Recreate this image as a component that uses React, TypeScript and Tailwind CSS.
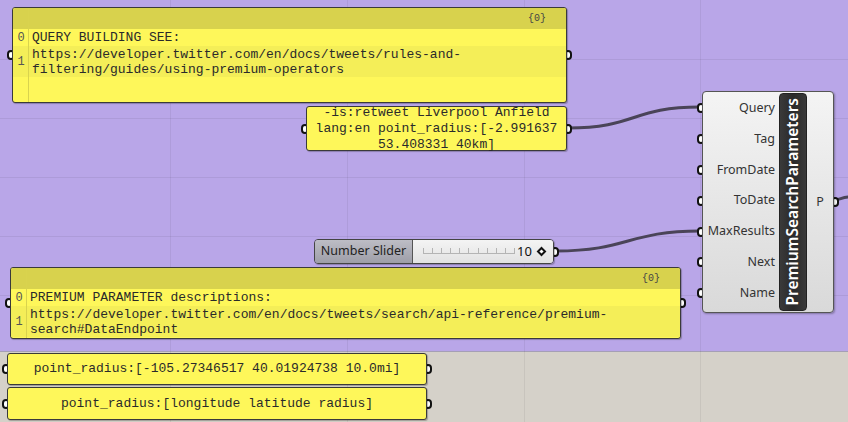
import React from 'react';

const mono = { fontFamily: '"Liberation Mono", "Courier New", monospace' };
const sans = { fontFamily: '"Noto Sans", sans-serif' };

const vLines = [170, 347, 524, 700];
const hLines = [59, 118, 177, 236, 295];

// half-hidden parameter grip on a node edge
function Port({ side }: { side: 'in' | 'out' }) {
  return (
    <div
      className={`absolute top-1/2 -translate-y-1/2 -z-10 w-[8px] h-[10px] rounded-full border-2 border-[#111] bg-white ${
        side === 'in' ? '-left-[5px]' : '-right-[5px]'
      }`}
    />
  );
}

type Row = { idx: string; lines: string[]; h: string };

function ListPanel({ className, rows }: { className: string; rows: Row[] }) {
  return (
    <div className={`absolute ${className}`}>
      <Port side="in" />
      <Port side="out" />
      <div className="relative w-full h-full flex flex-col border border-[#3a3a3a] rounded-[3px] bg-[#fef75a] overflow-hidden shadow-[1px_1px_1px_rgba(0,0,0,0.25)]">
        <div className="h-[21px] shrink-0 bg-[#d8d24d] flex justify-end items-start pr-[20px] pt-[3px] text-[10px] text-[#444]" style={mono}>
          {'{0}'}
        </div>
        {rows.map((r, i) => (
          <div key={i} className={`flex shrink-0 ${r.h} ${i % 2 === 1 ? 'bg-[#f4ee58]' : 'bg-[#fef75a]'}`}>
            <div className="w-[16px] shrink-0 flex items-center justify-center text-[12px] text-[#555]" style={mono}>
              {r.idx}
            </div>
            <div className="flex flex-col justify-center pl-[3px] text-[13px] leading-[15px] text-[#2a2a2a]" style={mono}>
              {r.lines.map((l, j) => (
                <div key={j} className="whitespace-pre">{l}</div>
              ))}
            </div>
          </div>
        ))}
        <div className="flex-1" />
        <div className="absolute left-[15px] top-0 bottom-0 w-px bg-[#d9d34e]" />
      </div>
    </div>
  );
}

function TextPanel({ className, lines }: { className: string; lines: string[] }) {
  return (
    <div className={`absolute ${className}`}>
      <Port side="in" />
      <Port side="out" />
      <div
        className="w-full h-full flex flex-col items-center justify-center border border-[#3a3a3a] rounded-[3px] bg-[#fef75a] text-[13px] leading-[16px] text-[#2a2a2a] shadow-[1px_1px_1px_rgba(0,0,0,0.25)]"
        style={mono}
      >
        {lines.map((l, i) => (
          <div key={i} className="whitespace-pre">{l}</div>
        ))}
      </div>
    </div>
  );
}

function NumberSlider() {
  return (
    <div className="absolute left-[314px] top-[239px] w-[240px] h-[25px]" style={sans}>
      <Port side="out" />
      <div className="w-full h-full flex border border-[#444] rounded-[4px] overflow-hidden shadow-[1px_1px_1px_rgba(0,0,0,0.25)]">
        <div className="w-[98px] shrink-0 bg-gradient-to-b from-[#bdbdc5] to-[#9e9ea8] border-r border-[#555] flex items-center justify-center text-[12.5px] text-[#222]">
          Number Slider
        </div>
        <div className="flex-1 bg-gradient-to-b from-[#f4f4f4] to-[#e2e2e2] flex items-center pl-[10px] pr-[8px]">
          <div className="relative w-[92px] h-[8px]">
            <div className="absolute left-0 right-0 top-[5px] h-px bg-[#b4b4b4]" />
            <div className="flex justify-between w-full h-[5px]">
              {Array.from({ length: 11 }).map((_, i) => (
                <div key={i} className="w-px h-full bg-[#b4b4b4]" />
              ))}
            </div>
          </div>
          <div className="text-[13px] text-[#111] ml-[2px]">10</div>
          <div className="ml-[6px] w-[7px] h-[7px] rotate-45 border-2 border-[#111] bg-white" />
        </div>
      </div>
    </div>
  );
}

const inputs = ['Query', 'Tag', 'FromDate', 'ToDate', 'MaxResults', 'Next', 'Name'];

function SearchComponent() {
  return (
    <div
      className="absolute left-[702px] top-[91px] w-[132px] h-[222px] flex border border-[#555] rounded-[4px] bg-gradient-to-b from-[#f4f4f4] to-[#d9d9d9] shadow-[1px_1px_2px_rgba(0,0,0,0.3)]"
      style={sans}
    >
      <div className="w-[76px] shrink-0 flex flex-col pt-[1px] pr-[4px] text-[12.5px] text-[#333]">
        {inputs.map((n) => (
          <div key={n} className="relative h-[30.8px] flex items-center justify-end">
            <div className="absolute top-1/2 -translate-y-1/2 -left-[6px] -z-10 w-[8px] h-[10px] rounded-full border-2 border-[#111] bg-white" />
            {n}
          </div>
        ))}
      </div>
      <div className="w-[28px] shrink-0 my-[1px] rounded-[4px] border border-[#222] bg-gradient-to-r from-[#3a3a3a] via-[#2a2a2a] to-[#3a3a3a] flex items-center justify-center overflow-hidden">
        <div className="[writing-mode:vertical-rl] rotate-180 text-white font-semibold text-[15.5px] whitespace-nowrap">
          PremiumSearchParameters
        </div>
      </div>
      <div className="relative flex-1 flex items-center justify-center text-[12.5px] text-[#333] pt-[1px]">
        P
        <div className="absolute top-1/2 -translate-y-1/2 -right-[6px] -z-10 w-[8px] h-[10px] rounded-full border-2 border-[#111] bg-white" />
      </div>
    </div>
  );
}

export default function App() {
  return (
    <div className="relative z-0 w-[848px] h-[422px] overflow-hidden bg-[#b9a6e8]">
      {/* canvas zones + grid */}
      <div className="absolute -z-30 left-0 right-0 top-[351px] bottom-0 bg-[#d5d1c9] border-t border-[#a59fb5]" />
      {vLines.map((x) => (
        <div key={x} className="absolute -z-30 top-0 bottom-0 w-px bg-[#0000000f]" style={{ left: x }} />
      ))}
      {hLines.map((y) => (
        <div key={y} className="absolute -z-30 left-0 right-0 h-px bg-[#00000010]" style={{ top: y }} />
      ))}

      {/* wires */}
      <svg className="absolute inset-0 -z-20" width="848" height="422">
        <path d="M568 128 C 636 128, 632 107, 700 107" fill="none" stroke="#4a4458" strokeWidth="3" />
        <path d="M556 251 C 628 251, 628 231, 700 231" fill="none" stroke="#4a4458" strokeWidth="3" />
        <path d="M834 200 C 840 200, 842 197, 850 197" fill="none" stroke="#4a4458" strokeWidth="3" />
      </svg>

      <ListPanel
        className="left-[12px] top-[7px] w-[555px] h-[96px]"
        rows={[
          { idx: '0', lines: ['QUERY BUILDING SEE:'], h: 'h-[17px]' },
          {
            idx: '1',
            lines: ['https://developer.twitter.com/en/docs/tweets/rules-and-', 'filtering/guides/using-premium-operators'],
            h: 'h-[31px]',
          },
        ]}
      />

      <TextPanel
        className="left-[306px] top-[106px] w-[261px] h-[45px]"
        lines={['-is:retweet Liverpool Anfield', 'lang:en point_radius:[-2.991637', '53.408331 40km]']}
      />

      <NumberSlider />

      <ListPanel
        className="left-[10px] top-[267px] w-[671px] h-[72px]"
        rows={[
          { idx: '0', lines: ['PREMIUM PARAMETER descriptions:'], h: 'h-[17px]' },
          {
            idx: '1',
            lines: ['https://developer.twitter.com/en/docs/tweets/search/api-reference/premium-', 'search#DataEndpoint'],
            h: 'h-[31px]',
          },
        ]}
      />

      <TextPanel className="left-[7px] top-[353px] w-[420px] h-[32px]" lines={['point_radius:[-105.27346517 40.01924738 10.0mi]']} />
      <TextPanel className="left-[7px] top-[387px] w-[420px] h-[33px]" lines={['point_radius:[longitude latitude radius]']} />

      <SearchComponent />
    </div>
  );
}
